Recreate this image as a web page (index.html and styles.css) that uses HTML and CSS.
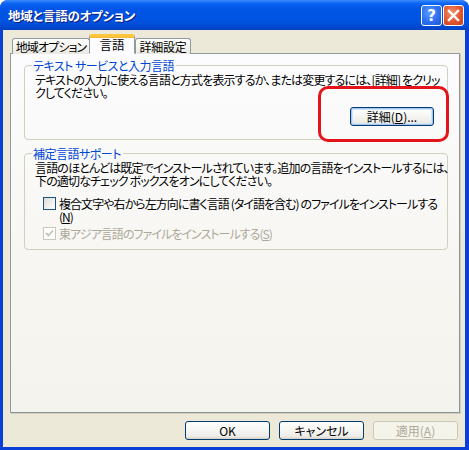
FILE: index.html
```html
<!DOCTYPE html>
<html lang="ja">
<head>
<meta charset="utf-8">
<title>地域と言語のオプション</title>
<link rel="stylesheet" href="styles.css">
</head>
<body>
<div class="window">
  <div class="titlebar">
    <span class="title">地域と言語のオプション</span>
    <div class="caption-buttons">
      <span class="cbtn help">?</span>
      <span class="cbtn close"><svg width="13" height="13" viewBox="0 0 13 13"><path d="M2 2 L11 11 M11 2 L2 11" stroke="#fff" stroke-width="2.4" stroke-linecap="square"/></svg></span>
    </div>
  </div>
  <div class="client">
    <div class="tabs">
      <div class="tab t1">地域オプション</div>
      <div class="tab t2 active">言語</div>
      <div class="tab t3">詳細設定</div>
    </div>
    <div class="panel">
      <fieldset class="group g1">
        <legend>テキスト サービスと入力言語</legend>
        <p class="desc">テキストの入力に使える言語と方式を表示するか、または変更するには、[詳細] をクリッ<br>クしてください。</p>
        <div class="btnrow">
          <span class="btn default">詳細(<u>D</u>)...</span>
        </div>
      </fieldset>
      <fieldset class="group g2">
        <legend>補定言語サポート</legend>
        <p class="desc">言語のほとんどは既定でインストールされています。追加の言語をインストールするには、<br>下の適切なチェック ボックスをオンにしてください。</p>
        <div class="check first">
          <span class="box"></span>
          <span class="label">複合文字や右から左方向に書く言語 (タイ語を含む) のファイルをインストールする<br>(<u>N</u>)</span>
        </div>
        <div class="check disabled">
          <span class="box"><svg width="9" height="9" viewBox="0 0 9 9"><path d="M1 4 L3.5 6.5 L8 1.5" fill="none" stroke="#C6C4B4" stroke-width="1.8"/></svg></span>
          <span class="label">東アジア言語のファイルをインストールする(<u>S</u>)</span>
        </div>
      </fieldset>
    </div>
    <div class="buttons">
      <span class="btn">OK</span>
      <span class="btn">キャンセル</span>
      <span class="btn disabled">適用(<u>A</u>)</span>
    </div>
  </div>
  <div class="annotation"></div>
</div>
</body>
</html>
```

FILE: styles.css
```css
* { box-sizing: border-box; }
html, body { margin: 0; padding: 0; background: #fff; }
body {
  font-family: "Noto Sans CJK JP", "Noto Sans", sans-serif;
  font-size: 12px;
  font-feature-settings: "palt";
  color: #000;
}
.window {
  position: relative;
  width: 469px;
  height: 450px;
  background: #0A3FD7;
  border-radius: 8px 8px 0 0;
  display: flex;
  flex-direction: column;
  overflow: hidden;
}
.titlebar {
  height: 30px;
  flex: none;
  display: flex;
  align-items: center;
  justify-content: space-between;
  padding: 0 5px 0 8px;
  background: linear-gradient(#3A8CFF 0%, #0A63F2 12%, #0055E6 30%, #0053E1 70%, #0148D0 90%, #0141C4 100%);
}
.title {
  color: #fff;
  font-weight: bold;
  font-size: 12.5px;
  letter-spacing: -0.2px;
  text-shadow: 1px 1px 0 #0A1C7A;
}
.caption-buttons { display: flex; gap: 1px; margin-top: 1px; }
.cbtn {
  width: 21px;
  height: 21px;
  border: 1px solid #fff;
  border-radius: 3px;
  display: flex;
  align-items: center;
  justify-content: center;
  color: #fff;
}
.help {
  background: radial-gradient(circle at 40% 35%, #5E9BFF 0%, #2B6FF0 55%, #1A56D8 100%);
  font-family: "DejaVu Sans", sans-serif;
  font-weight: bold;
  font-size: 15px;
}
.close {
  background: radial-gradient(circle at 40% 35%, #F0906E 0%, #E2552E 55%, #C9401F 100%);
}
.client {
  flex: 1;
  margin: 0 4px 3px 3px;
  background: #ECE9D8;
  padding: 4px 6px 0 7px;
  display: flex;
  flex-direction: column;
}
.tabs {
  display: flex;
  align-items: flex-end;
  height: 20px;
  padding-left: 2px;
  margin-bottom: -1px;
  position: relative;
  z-index: 1;
}
.tab {
  height: 16px;
  border: 1px solid #919B9C;
  border-bottom: none;
  border-radius: 3px 3px 0 0;
  background: linear-gradient(#FFFFFF, #F3F2ED 60%, #E9E8E1);
  line-height: 15px;
  text-align: center;
  white-space: nowrap;
}
.t1 { width: 78px; letter-spacing: -0.9px; }
.t2 { width: 46px; margin-left: -1px; }
.t3 { width: 56px; letter-spacing: -0.3px; }
.tab.active {
  height: 20px;
  background: #FCFCFE;
  border-top: 3px solid #FFC83C;
  box-shadow: inset 0 1px 0 #F8B636;
  line-height: 16px;
  border-bottom: 1px solid #FCFCFE;
  font-size: 12.5px;
}
.panel {
  width: 450px;
  height: 360px;
  border: 1px solid #919B9C;
  border-right-color: #8E9496;
  border-bottom-color: #8E9496;
  box-shadow: 1px 1px 0 #D0CEBF;
  background: linear-gradient(#FCFCFE, #F6F5F0 70%, #F4F3EE);
  padding: 4px 11px 0 13px;
  display: flex;
  flex-direction: column;
}
.group {
  margin: 0;
  border: 1px solid #D0D0BF;
  border-radius: 4px;
  padding: 0 13px 0 10px;
  min-width: 0;
}
.group legend {
  color: #0046D5;
  padding: 0 2px 0 1px;
  margin-left: -3px;
  line-height: 15px;
  letter-spacing: -0.5px;
}
.desc {
  margin: 0;
  line-height: 13px;
  white-space: nowrap;
  letter-spacing: -0.85px;
}
.g1 { height: 82px; }
.g2 { height: 104px; margin-top: 6px; }
.btnrow {
  display: flex;
  justify-content: flex-end;
  margin-top: 8px;
}
.btn {
  width: 85px;
  height: 19px;
  border: 1px solid #003C74;
  border-radius: 3px;
  background: linear-gradient(#FFFFFF, #F5F5F2 50%, #ECEBE6 85%, #D6D0C5);
  display: flex;
  align-items: center;
  justify-content: center;
  line-height: 13px;
  white-space: nowrap;
}
.btn.default {
  width: 84px;
  box-shadow: inset 0 0 0 1px #A8C5F0, inset 0 0 0 2px #CEE7FF;
}
.btn.disabled {
  border-color: #C9C7BA;
  background: #F5F4EA;
  color: #ACA899;
}
.btn u { text-decoration: underline; text-underline-offset: 1px; }
.check {
  display: flex;
  align-items: flex-start;
  margin-left: 8px;
  line-height: 13px;
  white-space: nowrap;
}
.check.first { margin-top: 10px; }
.check.disabled { margin-top: 4px; }
.box {
  width: 13px;
  height: 13px;
  flex: none;
  border: 1px solid #1C5180;
  background: linear-gradient(135deg, #DCDCD7, #FFFFFF);
  margin-right: 3px;
  display: flex;
  align-items: center;
  justify-content: center;
}
.check.disabled .box {
  border-color: #CAC8BB;
  background: #FFFFFF;
}
.check.disabled .label { color: #ACA899; }
.label { letter-spacing: -0.95px; }
.buttons {
  display: flex;
  justify-content: flex-end;
  gap: 9px;
  margin-top: 8px;
  padding-right: 1px;
}
.annotation {
  position: absolute;
  left: 318px;
  top: 86px;
  width: 131px;
  height: 56px;
  border: 3px solid #E5141A;
  border-radius: 10px;
}
```
